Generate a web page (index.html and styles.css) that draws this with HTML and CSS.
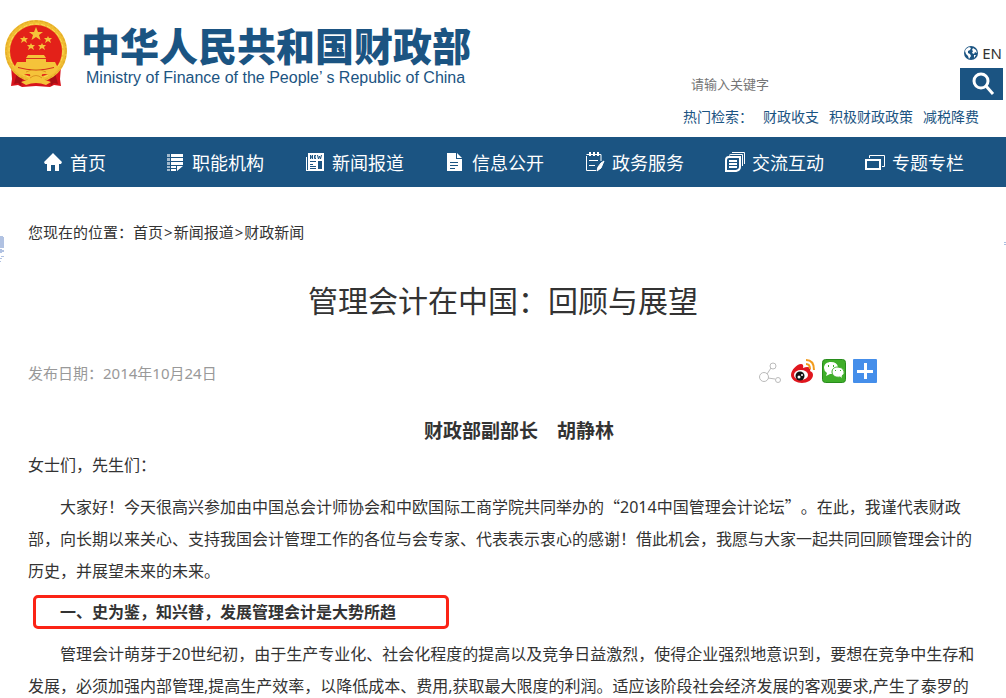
FILE: index.html
```html
<!DOCTYPE html>
<html lang="zh-CN">
<head>
    <meta charset="UTF-8">
    <meta name="viewport" content="width=device-width, initial-scale=1.0">
    <title>管理会计在中国：回顾与展望</title>
    <link rel="stylesheet" href="styles.css">
</head>
<body>
    <header class="header">
        <a class="brand" href="#">
            <svg class="emblem" viewBox="0 0 64 68" aria-hidden="true">
                <path fill="#d8141c" d="M7 46l1 13-1 7 7-1 4 2 14-1 14 1 4-2 7 1-1-7 1-13z"/>
                <path fill="#a90f16" d="M13 53l-3 11 4-1 3 3 2-10zM51 53l3 11-4-1-3 3-2-10z"/>
                <circle cx="32" cy="31" r="28" fill="none" stroke="#f0bd32" stroke-width="6"/>
                <circle cx="32" cy="31" r="30" fill="none" stroke="#dfa626" stroke-width="1" stroke-dasharray="3 2"/>
                <circle cx="32" cy="31" r="27" fill="none" stroke="#ffdb58" stroke-width="1" stroke-dasharray="4 2"/>
                <circle cx="32" cy="31" r="26" fill="#e32119"/>
                <g fill="#f5c33a">
                    <path d="M32 7l2 5h5l-4 3 1.500 5-4.500-3-4.500 3 1.500-5-4-3h5z"/>
                    <path d="M20 16l1 2h3l-2 2 1 3-3-2-3 2 1-3-2-2h3zM44 16l1 2h3l-2 2 1 3-3-2-3 2 1-3-2-2h3zM27 23l1 2h3l-2 2 1 3-3-2-3 2 1-3-2-2h3zM38 23l1 2h3l-2 2 1 3-3-2-3 2 1-3-2-2h3z"/>
                    <path d="M24 35h16l2 3H22zM22 39h20v4H22zM13 42h38l2 4H11z"/>
                    <path d="M9 46h46q-2 6-8 9-8-2-10 0l4 6-9-3-9 3 4-6q-2-2-10 0-6-3-8-9z"/>
                    <circle cx="32" cy="54" r="6"/>
                    <path d="M17 62q15-7 30 0l-5 3q-10-4-20 0z"/>
                </g>
                <path fill="none" stroke="#d2311b" d="M23 38.500h18M14 47.500q18 5 36 0"/>
                <path fill="none" stroke="#dd9420" d="M22 52q10-5 20 0M26 58q6-5 12 0"/>
            </svg>
            <span class="brand-text">
                <span class="brand-cn">中华人民共和国财政部</span>
                <span class="brand-en">Ministry of Finance of the People’ s Republic of China</span>
            </span>
        </a>
        <div class="tools">
            <a class="lang" href="#">
                <svg width="14" height="14" viewBox="0 0 14 14" aria-hidden="true">
                    <circle cx="7" cy="7" r="7" fill="#1b5482"/>
                    <path fill="#fff" d="M2 3l3-2 2 1-1 2-2 1v2l2 1 1 2-2 3-1-3-2-2-1-3zM9 2l3 2 1 3-2-1-1 2-2-1 1-2-1-1zM10 9l2 0-2 3z"/>
                </svg>
                EN
            </a>
            <form class="search">
                <input type="text" placeholder="请输入关键字" aria-label="请输入关键字">
                <button type="submit" aria-label="搜索">
                    <svg width="26" height="26" viewBox="0 0 26 26" fill="none" stroke="#fff" aria-hidden="true">
                        <circle cx="12" cy="10" r="7" stroke-width="3"/>
                        <path d="M17 15l7 8" stroke-width="3"/>
                    </svg>
                </button>
            </form>
            <div class="hot">
                <span class="hot-label">热门检索：</span>
                <a href="#">财政收支</a>
                <a href="#">积极财政政策</a>
                <a href="#">减税降费</a>
            </div>
        </div>
    </header>

    <nav class="nav">
        <a href="#">
            <svg viewBox="0 0 20 20"><path fill="#fff" d="M10 1l9 9-1 2h-2v7h-4v-6H8v6H4v-7H2l-1-2z"/></svg>
            首页
        </a>
        <a href="#">
            <svg viewBox="0 0 20 20" fill="#fff"><path opacity=".6" d="M2 2h3v3H2zM2 6h3v3H2zM2 10h3v3H2zM2 14h3v2H2zM2 17h3v2H2z"/><path d="M6 2h12v3H6zM6 6h12v3H6zM6 10h12v3H6zM6 14h5v2H6zM6 17h5v2H6zM12 14h6l-6 5z"/></svg>
            职能机构
        </a>
        <a href="#">
            <svg viewBox="0 0 20 20"><path fill="#fff" fill-rule="evenodd" d="M3 1h16v18H1V5h1v13h1zM5 9v1h6V9zM5 12v1h3v-1zM5 14v1h6v-1zM5 16v1h6v-1zM13 9v8h4V9z"/><path fill="none" stroke="#1b5482" d="M5.500 7V3l2 4V3M11 3.500H9.500v3H11M9.500 5H11M12.500 3l1 4 1-3 1 3 1-4"/></svg>
            新闻报道
        </a>
        <a href="#">
            <svg viewBox="0 0 20 20"><path fill="#fff" d="M2 1h9v6h6v12H2z"/><path fill="#fff" d="M12 1l5 5h-5z"/><path stroke="#1b5482" d="M5 10.500h8M5 13.500h8M5 16.500h5"/></svg>
            信息公开
        </a>
        <a href="#">
            <svg viewBox="0 0 20 20" fill="none" stroke="#fff"><path d="M4 2.500H1.500M1.500 4v14.500H11M3 2.500h13V9"/><path stroke-width="2" d="M5 0v4M9 0v4M13 0v4"/><path d="M4 8.500h9M4 13.500h6"/><path fill="#fff" d="M19 9l-3 7-4 3 1-4 3-4z"/></svg>
            政务服务
        </a>
        <a href="#">
            <svg viewBox="0 0 20 20" fill="none" stroke="#fff"><path stroke-width="2" d="M4 5h11v10q0 3-4 4H1V8q0-3 3-3z"/><path d="M4 3.500q1-1 2-1h11.500V14M7 .5h12.500V12"/><path stroke-width="2" d="M4 9h8M4 12h8M4 15h8"/></svg>
            交流互动
        </a>
        <a href="#">
            <svg viewBox="0 0 20 20" fill="none" stroke="#fff"><path stroke-width="2" d="M1 8h14v9H1z"/><path d="M4.500 6V3.500h15v11H17"/></svg>
            专题专栏
        </a>
    </nav>

    <main class="container">
        <div class="crumbs">您现在的位置：<a href="#">首页</a><span>&gt;</span><a href="#">新闻报道</a><span>&gt;</span><a href="#">财政新闻</a></div>
        <h1>管理会计在中国：回顾与展望</h1>
        <div class="meta">
            <span>发布日期：2014年10月24日</span>
            <div class="share">
                <a href="#" aria-label="分享">
                    <svg viewBox="1 0 24 24" fill="none" stroke="#bbb"><circle cx="5" cy="18" r="4.500"/><circle cx="14" cy="7" r="3"/><circle cx="19" cy="21" r="2.500"/><path d="M8 15l4-6M9 19l7 1"/></svg>
                </a>
                <a href="#" aria-label="新浪微博">
                    <svg viewBox="0 0 24 24"><path fill="#e0161e" d="M0 16C0 11 6 5 10 5q3 0 2 4 5-2 7 0 1 1 0 3 3 1 3 4c0 5-6 8-11 8S0 21 0 16z"/><ellipse cx="10" cy="16" rx="7" ry="5" fill="#fff"/><circle cx="9" cy="17" r="4.500" fill="#111"/><circle cx="8" cy="18" r="1.500" fill="#fff"/><circle cx="11" cy="16" r="1" fill="#fff"/><path fill="none" stroke="#f29b1d" stroke-width="2" d="M15 1q8 0 8 10M15 5q4 0 4 5"/></svg>
                </a>
                <a href="#" aria-label="微信">
                    <svg viewBox="0 0 24 24"><rect x=".5" y=".5" width="23" height="23" rx="3" fill="#3fae29" stroke="#288c1c"/><path fill="#fff" d="M9 3c-4 0-7 2-7 6q0 3 3 5l-1 3 4-2h2q-1-5 6-7-1-5-7-5z"/><path fill="#fff" stroke="#3fae29" d="M16 8c-4 0-6 2-6 5s3 6 8 5l3 2-1-3q3-2 2-5-1-4-6-4z"/><path fill="#3fae29" d="M6 6h1v2H6zM11 6h1v2h-1zM13 11h1v1h-1zM18 11h1v1h-1z"/></svg>
                </a>
                <a href="#" aria-label="更多">
                    <svg viewBox="0 0 24 24"><rect width="24" height="24" rx="1" fill="#458eea"/><path stroke="#fff" stroke-width="3" d="M12.500 4v16M4 12.500h16"/></svg>
                </a>
            </div>
        </div>
        <article class="article">
            <p class="author">财政部副部长　胡静林</p>
            <p class="greeting">女士们，先生们：</p>
            <p>大家好！今天很高兴参加由中国总会计师协会和中欧国际工商学院共同举办的<span class="quote">“</span>2014中国管理会计论坛<span class="quote">”</span>。在此，我谨代表财政部，向长期以来关心、支持我国会计管理工作的各位与会专家、代表表示衷心的感谢！借此机会，我愿与大家一起共同回顾管理会计的历史，并展望未来的未来。</p>
            <h2>一、史为鉴，知兴替，发展管理会计是大势所趋</h2>
            <p>管理会计萌芽于20世纪初，由于生产专业化、社会化程度的提高以及竞争日益激烈，使得企业强烈地意识到，要想在竞争中生存和发展，必须加强内部管理,提高生产效率，以降低成本、费用,获取最大限度的利润。适应该阶段社会经济发展的客观要求,产生了泰罗的</p>
        </article>
    </main>
    <svg class="float-left" width="5" height="26" viewBox="0 0 5 26" fill="#b1c2e2" aria-hidden="true"><path d="M0 0h3v1h1v11H0zM0 13h2v1h2v2H2v1H0zM1 20h3v1H1zM0 22h2v1H0zM0 25h1v1H0z"/></svg>
    <svg class="float-right" width="2" height="3" viewBox="0 0 2 3" fill="#a9bfe0" aria-hidden="true"><path d="M0 0h2v1H0zM0 2h2v1H0z"/></svg>
</body>
</html>
```
FILE: styles.css
```css
* {
    box-sizing: border-box;
}

body {
    margin: 0;
    font-family: "Noto Sans", "Noto Sans CJK SC", sans-serif;
    color: #333;
    background-color: #fff;
    position: relative;
    text-spacing-trim: space-all;
}

a {
    color: inherit;
    text-decoration: none;
}

.header {
    display: flex;
    justify-content: space-between;
    height: 137px;
    padding-left: 4px;
    color: #1b5482;
}

.brand {
    display: flex;
    gap: 13px;
    padding-top: 20px;
}

.emblem {
    width: 64px;
    height: 68px;
}

.brand-text {
    display: flex;
    flex-direction: column;
}

.brand-cn {
    font-family: "Noto Sans CJK SC", sans-serif;
    font-size: 39px;
    font-weight: 900;
    line-height: 48px;
}

.brand-en {
    padding-left: 5px;
    font-family: "Liberation Sans", Arial, sans-serif;
    font-size: 16px;
    line-height: 20px;
}

.tools {
    display: flex;
    flex-direction: column;
    width: 323px;
    padding-top: 42px;
}

.lang {
    display: flex;
    align-items: center;
    align-self: flex-end;
    gap: 4px;
    padding-right: 4px;
    font-size: 15px;
    line-height: 22px;
    color: #333;
}

.search {
    display: flex;
    height: 32px;
    margin: 4px 3px 0 0;
}

.search input {
    flex: 1;
    min-width: 0;
    padding: 0 8px;
    border: none;
    font-family: inherit;
    font-size: 13px;
    background: none;
}

.search input::placeholder {
    color: #757575;
}

.search button {
    display: flex;
    align-items: center;
    justify-content: center;
    width: 43px;
    padding: 0;
    border: none;
    background-color: #1b5482;
    cursor: pointer;
}

.hot {
    display: flex;
    gap: 10px;
    padding-top: 6px;
    font-size: 14px;
    line-height: 22px;
}

.nav {
    display: flex;
    height: 50px;
    padding: 0 21px 0 5px;
    background-color: #1b5482;
}

.nav a {
    display: flex;
    flex: 1;
    align-items: center;
    justify-content: center;
    gap: 7px;
    padding-right: 1px;
    font-size: 18px;
    color: #fff;
}

.nav svg {
    width: 20px;
    height: 20px;
}

.container {
    padding: 32px 28px 0;
}

.crumbs {
    font-size: 15px;
    line-height: 26px;
}

.crumbs span {
    padding: 0 1px;
}

h1 {
    margin: 33px 0;
    font-size: 30px;
    font-weight: normal;
    line-height: 46px;
    text-align: center;
}

.meta {
    display: flex;
    align-items: center;
    justify-content: space-between;
    height: 30px;
    padding-right: 101px;
    font-size: 15px;
    color: #999;
}

.share {
    display: flex;
    gap: 7px;
    padding-bottom: 2px;
}

.share svg {
    display: block;
    width: 24px;
    height: 24px;
    overflow: visible;
}

.article {
    padding-top: 26px;
    font-size: 16px;
    line-height: 32px;
}

.article p {
    margin: 0 0 9px;
    text-indent: 2em;
}

.article .author {
    margin: 0;
    font-size: 19px;
    font-weight: bold;
    line-height: 36px;
    text-align: center;
    text-indent: 32px;
}

.article .greeting {
    text-indent: 0;
}

.quote {
    font-family: "Noto Sans CJK SC", sans-serif;
}

h2 {
    width: 414px;
    margin: 0 0 10px 6px;
    padding-left: 26px;
    border-radius: 4px;
    outline: 3px solid #fb2316;
    outline-offset: -2px;
    font-size: 16px;
    line-height: 32px;
}

.float-left {
    position: absolute;
    top: 236px;
    left: 0;
}

.float-right {
    position: absolute;
    top: 242px;
    right: 0;
}
```
